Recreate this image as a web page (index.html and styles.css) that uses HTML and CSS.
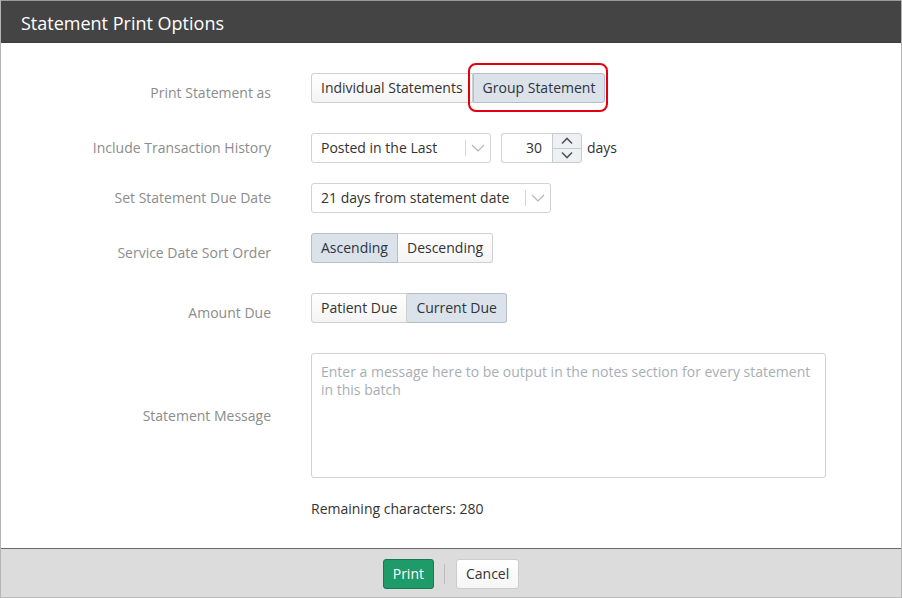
FILE: index.html
```html
<!DOCTYPE html>
<html>
<head>
<meta charset="utf-8">
<link rel="stylesheet" href="styles.css">
</head>
<body>
<div class="dialog">
  <div class="header">Statement Print Options</div>
  <div class="content">
    <div class="row">
      <div class="label">Print Statement as</div>
      <div class="field field-toggle">
        <div class="btn-group">
          <button class="btn">Individual Statements</button>
          <span class="highlight"><button class="btn active">Group Statement</button></span>
        </div>
      </div>
    </div>
    <div class="row">
      <div class="label">Include Transaction History</div>
      <div class="field">
        <div class="select w180">
          <span class="select-text">Posted in the Last</span>
          <span class="select-arrow">
            <svg width="14" height="8" viewBox="0 0 14 8"><polyline points="1,1 7,7 13,1" fill="none" stroke="#b5b5b5" stroke-width="1.2"/></svg>
          </span>
        </div>
        <div class="number">
          <span class="number-value">30</span>
          <span class="spinner">
            <span class="spin">
              <svg width="12" height="8" viewBox="0 0 12 8"><polyline points="1,6.5 6,1.5 11,6.5" fill="none" stroke="#555" stroke-width="1.6"/></svg>
            </span>
            <span class="spin spin-down">
              <svg width="12" height="8" viewBox="0 0 12 8"><polyline points="1,1.5 6,6.5 11,1.5" fill="none" stroke="#555" stroke-width="1.6"/></svg>
            </span>
          </span>
        </div>
        <span class="unit">days</span>
      </div>
    </div>
    <div class="row">
      <div class="label">Set Statement Due Date</div>
      <div class="field">
        <div class="select w240">
          <span class="select-text">21 days from statement date</span>
          <span class="select-arrow">
            <svg width="14" height="8" viewBox="0 0 14 8"><polyline points="1,1 7,7 13,1" fill="none" stroke="#b5b5b5" stroke-width="1.2"/></svg>
          </span>
        </div>
      </div>
    </div>
    <div class="row">
      <div class="label">Service Date Sort Order</div>
      <div class="field field-toggle">
        <div class="btn-group">
          <button class="btn active">Ascending</button><button class="btn">Descending</button>
        </div>
      </div>
    </div>
    <div class="row">
      <div class="label">Amount Due</div>
      <div class="field field-toggle">
        <div class="btn-group">
          <button class="btn">Patient Due</button><button class="btn active">Current Due</button>
        </div>
      </div>
    </div>
    <div class="row">
      <div class="label">Statement Message</div>
      <div class="field">
        <textarea class="message" placeholder="Enter a message here to be output in the notes section for every statement in this batch"></textarea>
      </div>
    </div>
    <div class="row remaining-row">
      <div class="label"></div>
      <div class="field remaining">Remaining characters: 280</div>
    </div>
  </div>
  <div class="footer">
    <button class="btn primary">Print</button>
    <span class="sep"></span>
    <button class="btn cancel">Cancel</button>
  </div>
</div>
</body>
</html>
```

FILE: styles.css
```css
* { box-sizing: border-box; }
html, body { margin: 0; padding: 0; }
body {
  font-family: "Open Sans", "Noto Sans", sans-serif;
  font-size: 14px;
  color: #333;
  background: #fff;
  width: 902px;
  height: 598px;
  overflow: hidden;
}
.dialog {
  width: 902px;
  height: 598px;
  border-left: 1px solid #b4b4b4;
  border-right: 1px solid #b4b4b4;
  border-bottom: 1px solid #bdbdbd;
  display: flex;
  flex-direction: column;
}
.header {
  height: 43px;
  border-top: 1px solid #9a9a9a;
  background: #444444;
  color: #fff;
  font-size: 18px;
  line-height: 41px;
  padding-left: 20px;
  padding-top: 2px;
  border-bottom: 1px solid #3c3c3c;
}
.content {
  flex: 1;
  padding-top: 30px;
  display: flex;
  flex-direction: column;
}
.row {
  display: grid;
  grid-template-columns: 270px 1fr;
  column-gap: 40px;
  align-items: center;
  margin-top: 20px;
}
.row:first-child { margin-top: 0; }
.label {
  text-align: right;
  color: #8c8c8c;
  line-height: 20px;
}
.field {
  display: flex;
  align-items: center;
}
.field-toggle { padding-bottom: 10px; }
.btn-group { display: flex; align-items: center; }
.btn {
  font-family: inherit;
  font-size: 14px;
  color: #333;
  height: 30px;
  padding: 0 9px;
  border: 1px solid #cfcfcf;
  border-radius: 3px;
  background: linear-gradient(#ffffff, #f4f4f4);
  line-height: 28px;
  margin: 0;
}
.btn-group .btn { border-radius: 0; }
.btn-group > .btn:first-child { border-radius: 3px 0 0 3px; }
.btn-group > .btn:last-child,
.btn-group > .highlight .btn { border-radius: 0 3px 3px 0; }
.btn-group .btn + .btn { border-left: none; }
.btn.active {
  background: #dbe2e9;
  border-color: #b4bec8;
  color: #2c3440;
}
.highlight {
  position: relative;
  display: inline-flex;
  margin-left: 0;
}
.highlight::after {
  content: "";
  position: absolute;
  left: -5px;
  right: -3px;
  top: -10px;
  bottom: -9px;
  border: 2px solid #e2000f;
  border-radius: 8px;
}
.select {
  height: 30px;
  border: 1px solid #d2d2d2;
  border-radius: 3px;
  display: flex;
  align-items: center;
  background: #fff;
}
.w180 { width: 180px; }
.w240 { width: 240px; }
.select-text {
  flex: 1;
  padding-left: 9px;
  color: #333;
  white-space: nowrap;
  line-height: 26px;
}
.select-arrow {
  width: 25px;
  height: 16px;
  border-left: 1px solid #d6d6d6;
  display: flex;
  align-items: center;
  justify-content: center;
  margin-right: 0;
}
.number {
  display: flex;
  margin-left: 10px;
  height: 30px;
}
.number-value {
  width: 51px;
  height: 30px;
  border: 1px solid #d2d2d2;
  border-right: none;
  border-radius: 3px 0 0 3px;
  text-align: right;
  padding-right: 10px;
  line-height: 27px;
}
.spinner {
  width: 30px;
  height: 30px;
  border: 1px solid #c6ccd2;
  border-radius: 0 3px 3px 0;
  display: flex;
  flex-direction: column;
  background: #eef1f4;
}
.spin {
  flex: 1;
  display: flex;
  align-items: center;
  justify-content: center;
}
.spin-down { border-top: 1px solid #c6ccd2; }
.unit { margin-left: 5px; color: #333; line-height: 18px; }
.message {
  width: 515px;
  height: 125px;
  border: 1px solid #d2d2d2;
  border-radius: 3px;
  font-family: inherit;
  font-size: 14px;
  line-height: 18px;
  padding: 9px 9px;
  resize: none;
  color: #333;
  margin: 0;
  display: block;
}
.message::placeholder { color: #a9aeb4; opacity: 1; }
.remaining-row { margin-top: 21px; }
.remaining { line-height: 20px; color: #333; }
.footer {
  height: 49px;
  flex: none;
  border-top: 1px solid #6c6c6c;
  background: #dcdcdc;
  display: flex;
  align-items: center;
  justify-content: center;
  padding-top: 1px;
}
.btn.primary {
  background: #1f9a69;
  border-color: #177a52;
  color: #fff;
  padding: 0 9px;
}
.sep {
  width: 1px;
  height: 20px;
  background: #bcbcbc;
  margin: 0 11px 0 10px;
}
.btn.cancel {
  background: linear-gradient(#ffffff, #f6f6f6);
  border-color: #cccccc;
}
```
